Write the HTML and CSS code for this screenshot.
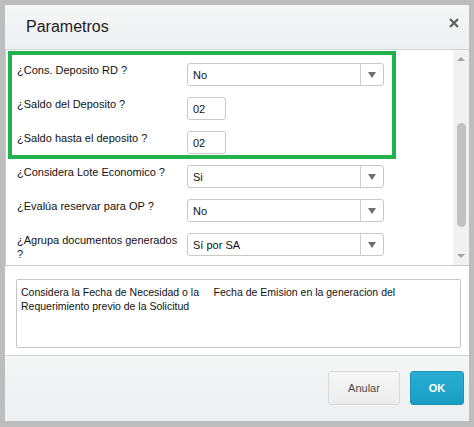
FILE: index.html
```html
<!DOCTYPE html>
<html>

<head>
    <title>Parametros</title>

    <link rel="stylesheet" href="styles.css">
</head>

<body>

    <div class="dialog">
        <div class="dialog-header">
            <span class="dialog-title">Parametros</span>
            <svg class="close" width="10" height="10" viewBox="0 0 10 10">
                <path d="M1 1 L9 9 M9 1 L1 9" stroke="#5f5f5f" stroke-width="2.2" />
            </svg>
        </div>

        <div class="dialog-body">
            <div class="panel">
                <div class="fields">
                    <div class="highlight">
                        <div class="row">
                            <label class="label">¿Cons. Deposito RD ?</label>
                            <div class="select"><span class="select-value">No</span><span class="select-arrow"></span></div>
                        </div>
                        <div class="row">
                            <label class="label">¿Saldo del Deposito ?</label>
                            <div class="input">02</div>
                        </div>
                        <div class="row">
                            <label class="label">¿Saldo hasta el deposito ?</label>
                            <div class="input">02</div>
                        </div>
                    </div>
                    <div class="rest">
                        <div class="row">
                            <label class="label">¿Considera Lote Economico ?</label>
                            <div class="select"><span class="select-value">Si</span><span class="select-arrow"></span></div>
                        </div>
                        <div class="row">
                            <label class="label">¿Evalúa reservar para OP ?</label>
                            <div class="select"><span class="select-value">No</span><span class="select-arrow"></span></div>
                        </div>
                        <div class="row">
                            <label class="label">¿Agrupa documentos generados ?</label>
                            <div class="select"><span class="select-value">Sí por SA</span><span class="select-arrow"></span></div>
                        </div>
                    </div>
                </div>

                <!-- fake scrollbar -->
                <div class="scrollbar">
                    <span class="arrow-up"></span>
                    <span class="thumb"></span>
                    <span class="arrow-down"></span>
                </div>
            </div>

            <div class="help">Considera la Fecha de Necesidad o la     Fecha de Emision en la generacion del Requerimiento previo de la Solicitud</div>
        </div>

        <div class="dialog-footer">
            <button class="btn">Anular</button>
            <button class="btn btn-primary">OK</button>
        </div>
    </div>

</body>

</html>
```

FILE: styles.css
```css
body {
    margin: 0;
    padding: 5px;
    background: #bdbdbd;
    font-family: "Liberation Sans", Arial, sans-serif;
    font-size: 11px;
    color: #111;
}

.dialog {
    width: 464px;
    height: 416px;
    background: #fff;
    display: flex;
    flex-direction: column;
}

/**
 * Header
 */
.dialog-header {
    height: 45px;
    border-bottom: 1px solid #d2d3d4;
    background: linear-gradient(#f5f6f6, #eeeff1);
    display: flex;
    align-items: center;
    justify-content: space-between;
    padding: 0 10px 2px 21px;
    box-sizing: border-box;
}

.dialog-title {
    font-size: 16px;
    color: #1c1c1c;
    padding-top: 2px;
}

.close {
    margin-top: -6px;
}

/**
 * Scrolling panel with the fields
 */
.dialog-body {
    flex: 1;
}

.panel {
    height: 216px;
    box-sizing: border-box;
    border-left: 1px solid #c9c9c9;
    border-bottom: 1px solid #c9c9c9;
    display: flex;
}

.fields {
    flex: 1;
    padding-left: 11px;
}

.highlight {
    width: 388px;
    box-sizing: border-box;
    margin: 1px 0 0 -9px;
    border: 4px solid #22b14c;
    padding: 8px 0 1px 5px;
    display: flex;
    flex-direction: column;
    gap: 11px;
}

.rest {
    margin-top: 6px;
    display: flex;
    flex-direction: column;
    gap: 11px;
}

.row {
    display: flex;
    height: 23px;
}

.label {
    width: 165px;
    margin-right: 5px;
    line-height: 14px;
    color: #111;
}

.select {
    width: 197px;
    height: 23px;
    box-sizing: border-box;
    border: 1px solid #c9c9c9;
    border-radius: 3px;
    display: flex;
    align-items: center;
}

.select-value {
    flex: 1;
    padding-left: 5px;
}

.select-arrow {
    width: 22px;
    height: 100%;
    border-left: 1px solid #cfcfcf;
    display: flex;
    align-items: center;
    justify-content: center;
}

.select-arrow::after {
    content: "";
    border-left: 4px solid transparent;
    border-right: 4px solid transparent;
    border-top: 6px solid #6d6e70;
}

.input {
    width: 39px;
    height: 23px;
    box-sizing: border-box;
    border: 1px solid #c9c9c9;
    border-radius: 3px;
    padding-left: 5px;
    display: flex;
    align-items: center;
}

.scrollbar {
    width: 16px;
    background: #f1f1f1;
    display: flex;
    flex-direction: column;
    align-items: center;
}

.arrow-up,
.arrow-down {
    border-left: 4px solid transparent;
    border-right: 4px solid transparent;
}

.arrow-up {
    margin-top: 7px;
    border-bottom: 4px solid #a3a3a3;
}

.thumb {
    width: 9px;
    height: 104px;
    margin-top: 62px;
    border-radius: 5px;
    background: #c1c1c1;
}

.arrow-down {
    margin-top: 27px;
    border-top: 4px solid #a3a3a3;
}

/**
 * Help text box
 */
.help {
    margin: 13px 8px 0 11px;
    height: 69px;
    box-sizing: border-box;
    border: 1px solid #c6c6c6;
    border-radius: 2px;
    padding: 5px 4px;
    font-size: 10.5px;
    line-height: 14px;
    white-space: pre-wrap;
}

/**
 * Footer buttons
 */
.dialog-footer {
    height: 66px;
    box-sizing: border-box;
    border-top: 1px solid #d4d4d4;
    background: linear-gradient(#f4f5f5, #eeeff1);
    display: flex;
    justify-content: flex-end;
    align-items: flex-start;
    gap: 10px;
    padding: 15px 5px 0 0;
}

.btn {
    height: 34px;
    width: 72px;
    border: 1px solid #d9d9d9;
    border-radius: 3px;
    background: linear-gradient(#f8f8f8, #ebebeb);
    font-family: "Liberation Sans", Arial, sans-serif;
    font-size: 11px;
    color: #4a4a4a;
}

.btn-primary {
    width: 54px;
    border-color: #1a93b8;
    background: linear-gradient(#2aadd2, #1a9ec4);
    color: #fff;
    font-weight: bold;
}
```
